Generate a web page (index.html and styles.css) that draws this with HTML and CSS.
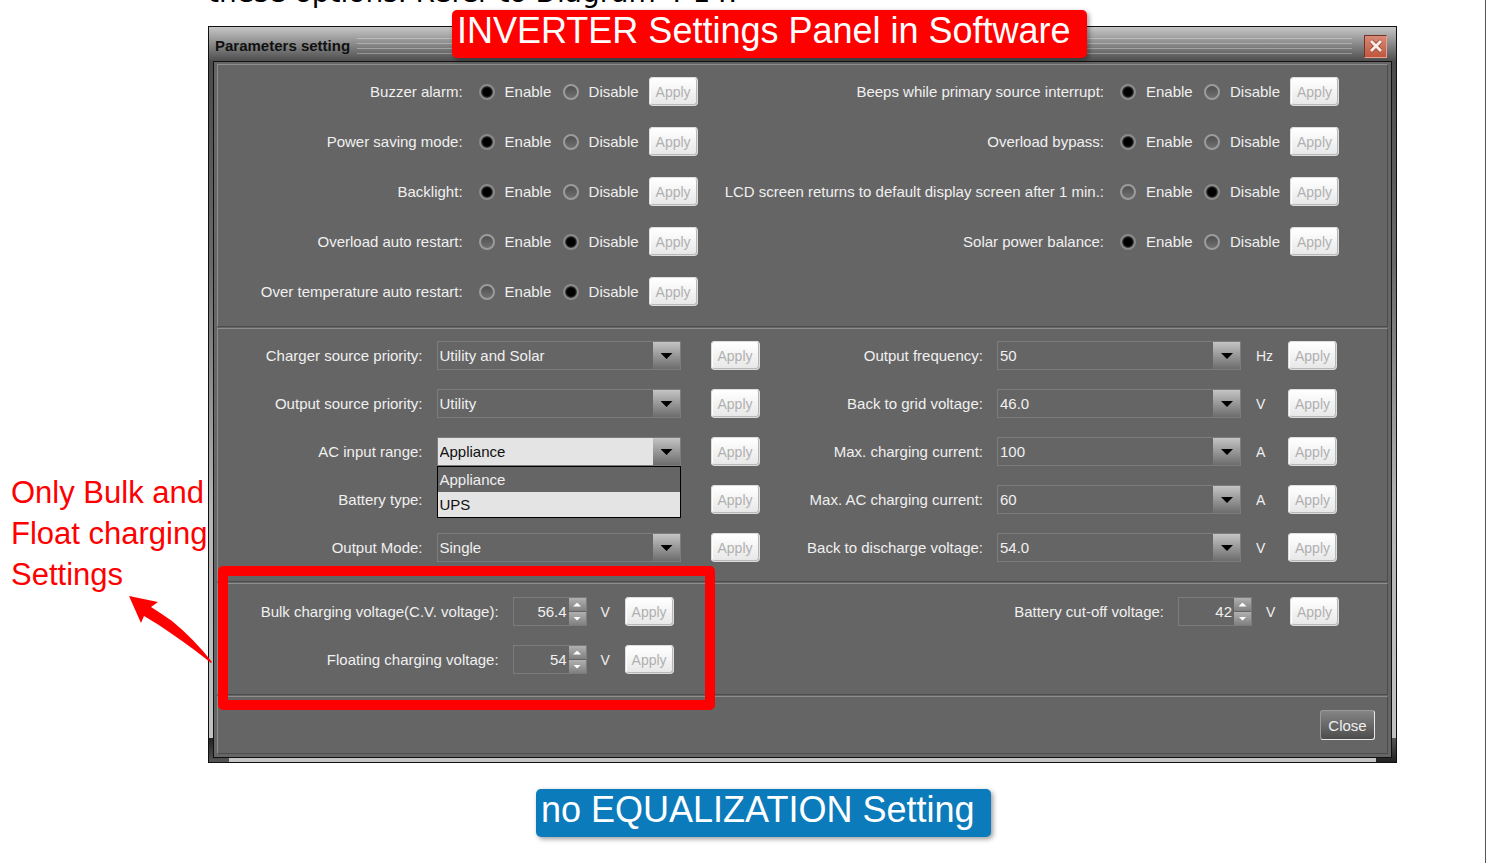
FILE: index.html
```html
<!DOCTYPE html>
<html lang="en">
<head>
    <meta charset="UTF-8">
    <meta name="viewport" content="width=device-width, initial-scale=1.0">
    <title>Parameters setting</title>
    <link rel="stylesheet" href="styles.css">
</head>
<body>
<main class="page">
    <p class="manual-text">these options. Refer to Diagram 4-14.</p>

    <div class="figure">
        <section class="window">
            <header class="title-bar">
                <h1>Parameters setting</h1>
                <span class="grip"></span>
                <button class="window-close" type="button" aria-label="Close window">
                    <svg viewBox="0 0 14 14" width="14" height="14"><path d="M2 2L12 12M12 2L2 12" stroke="#7d3020" stroke-width="4"/><path d="M2 2L12 12M12 2L2 12" stroke="#fbeee6" stroke-width="3"/></svg>
                </button>
            </header>

            <form class="panel">
                <!-- on / off options -->
                <div class="group switches">
                    <div class="column">
                        <div class="row" role="radiogroup" aria-labelledby="l-buzzer">
                            <span class="name" id="l-buzzer">Buzzer alarm:</span>
                            <label class="option"><input type="radio" name="buzzer" checked>Enable</label>
                            <label class="option"><input type="radio" name="buzzer">Disable</label>
                            <button class="apply" type="button" disabled>Apply</button>
                        </div>
                        <div class="row" role="radiogroup" aria-labelledby="l-saving">
                            <span class="name" id="l-saving">Power saving mode:</span>
                            <label class="option"><input type="radio" name="saving" checked>Enable</label>
                            <label class="option"><input type="radio" name="saving">Disable</label>
                            <button class="apply" type="button" disabled>Apply</button>
                        </div>
                        <div class="row" role="radiogroup" aria-labelledby="l-backlight">
                            <span class="name" id="l-backlight">Backlight:</span>
                            <label class="option"><input type="radio" name="backlight" checked>Enable</label>
                            <label class="option"><input type="radio" name="backlight">Disable</label>
                            <button class="apply" type="button" disabled>Apply</button>
                        </div>
                        <div class="row" role="radiogroup" aria-labelledby="l-overload">
                            <span class="name" id="l-overload">Overload auto restart:</span>
                            <label class="option"><input type="radio" name="overload">Enable</label>
                            <label class="option"><input type="radio" name="overload" checked>Disable</label>
                            <button class="apply" type="button" disabled>Apply</button>
                        </div>
                        <div class="row" role="radiogroup" aria-labelledby="l-overtemp">
                            <span class="name" id="l-overtemp">Over temperature auto restart:</span>
                            <label class="option"><input type="radio" name="overtemp">Enable</label>
                            <label class="option"><input type="radio" name="overtemp" checked>Disable</label>
                            <button class="apply" type="button" disabled>Apply</button>
                        </div>
                    </div>
                    <div class="column">
                        <div class="row" role="radiogroup" aria-labelledby="l-beeps">
                            <span class="name" id="l-beeps">Beeps while primary source interrupt:</span>
                            <label class="option"><input type="radio" name="beeps" checked>Enable</label>
                            <label class="option"><input type="radio" name="beeps">Disable</label>
                            <button class="apply" type="button" disabled>Apply</button>
                        </div>
                        <div class="row" role="radiogroup" aria-labelledby="l-bypass">
                            <span class="name" id="l-bypass">Overload bypass:</span>
                            <label class="option"><input type="radio" name="bypass" checked>Enable</label>
                            <label class="option"><input type="radio" name="bypass">Disable</label>
                            <button class="apply" type="button" disabled>Apply</button>
                        </div>
                        <div class="row" role="radiogroup" aria-labelledby="l-lcd">
                            <span class="name" id="l-lcd">LCD screen returns to default display screen after 1 min.:</span>
                            <label class="option"><input type="radio" name="lcd">Enable</label>
                            <label class="option"><input type="radio" name="lcd" checked>Disable</label>
                            <button class="apply" type="button" disabled>Apply</button>
                        </div>
                        <div class="row" role="radiogroup" aria-labelledby="l-solar">
                            <span class="name" id="l-solar">Solar power balance:</span>
                            <label class="option"><input type="radio" name="solar" checked>Enable</label>
                            <label class="option"><input type="radio" name="solar">Disable</label>
                            <button class="apply" type="button" disabled>Apply</button>
                        </div>
                    </div>
                </div>

                <!-- drop-downs -->
                <div class="group selects">
                    <div class="column">
                        <div class="row">
                            <label class="name" for="charger">Charger source priority:</label>
                            <span class="combo"><select id="charger"><option>Utility and Solar</option></select></span>
                            <button class="apply" type="button" disabled>Apply</button>
                        </div>
                        <div class="row">
                            <label class="name" for="source">Output source priority:</label>
                            <span class="combo"><select id="source"><option>Utility</option></select></span>
                            <button class="apply" type="button" disabled>Apply</button>
                        </div>
                        <div class="row">
                            <label class="name" for="range">AC input range:</label>
                            <span class="combo open">
                                <select id="range"><option>Appliance</option><option>UPS</option></select>
                                <ul class="menu">
                                    <li class="current">Appliance</li>
                                    <li>UPS</li>
                                </ul>
                            </span>
                            <button class="apply" type="button" disabled>Apply</button>
                        </div>
                        <div class="row">
                            <label class="name" for="battery">Battery type:</label>
                            <span class="combo"><select id="battery"></select></span>
                            <button class="apply" type="button" disabled>Apply</button>
                        </div>
                        <div class="row">
                            <label class="name" for="mode">Output Mode:</label>
                            <span class="combo"><select id="mode"><option>Single</option></select></span>
                            <button class="apply" type="button" disabled>Apply</button>
                        </div>
                    </div>
                    <div class="column">
                        <div class="row">
                            <label class="name" for="freq">Output frequency:</label>
                            <span class="combo"><select id="freq"><option>50</option></select></span>
                            <span class="unit">Hz</span>
                            <button class="apply" type="button" disabled>Apply</button>
                        </div>
                        <div class="row">
                            <label class="name" for="grid">Back to grid voltage:</label>
                            <span class="combo"><select id="grid"><option>46.0</option></select></span>
                            <span class="unit">V</span>
                            <button class="apply" type="button" disabled>Apply</button>
                        </div>
                        <div class="row">
                            <label class="name" for="maxcharge">Max. charging current:</label>
                            <span class="combo"><select id="maxcharge"><option>100</option></select></span>
                            <span class="unit">A</span>
                            <button class="apply" type="button" disabled>Apply</button>
                        </div>
                        <div class="row">
                            <label class="name" for="maxac">Max. AC charging current:</label>
                            <span class="combo"><select id="maxac"><option>60</option></select></span>
                            <span class="unit">A</span>
                            <button class="apply" type="button" disabled>Apply</button>
                        </div>
                        <div class="row">
                            <label class="name" for="discharge">Back to discharge voltage:</label>
                            <span class="combo"><select id="discharge"><option>54.0</option></select></span>
                            <span class="unit">V</span>
                            <button class="apply" type="button" disabled>Apply</button>
                        </div>
                    </div>
                </div>

                <!-- voltages -->
                <div class="group voltages">
                    <div class="column">
                        <div class="row">
                            <label class="name" for="bulk">Bulk charging voltage(C.V. voltage):</label>
                            <span class="spinner">
                                <input id="bulk" type="text" value="56.4">
                                <span class="steps"><button type="button" aria-label="Up"></button><button type="button" aria-label="Down"></button></span>
                            </span>
                            <span class="unit">V</span>
                            <button class="apply" type="button" disabled>Apply</button>
                        </div>
                        <div class="row">
                            <label class="name" for="float">Floating charging voltage:</label>
                            <span class="spinner">
                                <input id="float" type="text" value="54">
                                <span class="steps"><button type="button" aria-label="Up"></button><button type="button" aria-label="Down"></button></span>
                            </span>
                            <span class="unit">V</span>
                            <button class="apply" type="button" disabled>Apply</button>
                        </div>
                    </div>
                    <div class="column">
                        <div class="row">
                            <label class="name" for="cutoff">Battery cut-off voltage:</label>
                            <span class="spinner">
                                <input id="cutoff" type="text" value="42">
                                <span class="steps"><button type="button" aria-label="Up"></button><button type="button" aria-label="Down"></button></span>
                            </span>
                            <span class="unit">V</span>
                            <button class="apply" type="button" disabled>Apply</button>
                        </div>
                    </div>
                </div>

                <div class="group footer">
                    <button class="close" type="button">Close</button>
                </div>
            </form>
        </section>

        <!-- notes drawn over the window -->
        <div class="banner">INVERTER Settings Panel in Software</div>
        <div class="highlight"></div>
        <p class="note">Only Bulk and Float charging Settings</p>
        <svg class="arrow" viewBox="0 0 86 68" width="86" height="68"><path d="M1 0L30 6L23 11Q34 18 44 25Q66 43 84 66L83 67Q66 53 44 38Q30 28 16 20L13 27Z" fill="#ff0000"/></svg>
    </div>

    <div class="caption">no EQUALIZATION Setting</div>
</main>
</body>
</html>
```

FILE: styles.css
```css
* {
    box-sizing: border-box;
}

body {
    margin: 0;
    background: #fff;
    font-family: "Liberation Sans", Arial, sans-serif;
    font-size: 15px;
    color: #f0f0f0;
}

.page {
    min-height: 100vh;
    margin-right: 1px;
    padding: 0 88px 0 208px;
    border-right: 1px solid #555;
    overflow: hidden;
}

/* last line of the manual text, scrolled past the top */
.manual-text {
    height: 26px;
    margin: -20px 0 20px;
    color: #000;
    font-family: "DejaVu Sans", Verdana, sans-serif;
    font-size: 28px;
    line-height: 26px;
    white-space: nowrap;
}

.figure {
    position: relative;
}

/* window frame */
.window {
    border: 1px solid #111;
    padding: 0 4px 4px;
    background:
        linear-gradient(#222, #555) left bottom / 20px 24px no-repeat,
        linear-gradient(#555, #222) right bottom / 20px 24px no-repeat,
        linear-gradient(#c6c6c6 0, #4a4a4a 35px, #6a6a6a 240px, #b4b4b4 480px, #c4c4c4);
}

.title-bar {
    display: flex;
    align-items: center;
    height: 34px;
    padding: 4px 5px 0 2px;
}

.title-bar h1 {
    margin: 0;
    padding-bottom: 2px;
    color: #111;
    font-size: 15px;
    font-weight: bold;
}

.grip {
    flex: 1;
    height: 16px;
    margin: 0 12px 0 7px;
    background: repeating-linear-gradient(rgba(255, 255, 255, 0.3) 0, rgba(255, 255, 255, 0.3) 1px, transparent 1px, transparent 5px);
}

.window-close {
    display: flex;
    align-items: center;
    justify-content: center;
    width: 23px;
    height: 23px;
    padding: 0;
    border: 1px solid;
    border-color: #703428 #e8a090 #e8a090 #703428;
    background: linear-gradient(#d98a78, #c0563c);
}

.panel {
    border: 1px solid #111;
    background: #656565;
    padding: 2px 3px 3px;
}

/* groups */
.group {
    display: grid;
    border: 1px solid;
    border-color: #8e8e8e #4c4c4c #4c4c4c #8e8e8e;
    margin-bottom: 1px;
}

.column {
    display: flex;
    flex-direction: column;
}

.row {
    display: flex;
    align-items: center;
    justify-content: flex-end;
    height: 29px;
}

.name {
    white-space: nowrap;
}

.switches {
    grid-template-columns: 480fr 642fr;
    padding: 12px 48px 20px 0;
}

.switches .column {
    gap: 21px;
}

.switches .name {
    margin-right: 16px;
}

.selects {
    grid-template-columns: 542fr 578fr;
    padding: 12px 50px 19px 0;
}

.selects .column,
.voltages .column {
    gap: 19px;
}

.voltages {
    grid-template-columns: 456fr 666fr;
    padding: 13px 48px 20px 0;
}

.footer {
    justify-content: end;
    padding: 13px 12px 13px 0;
    margin: 0;
}

/* radio buttons */
.option {
    display: flex;
    align-items: center;
    width: 84px;
    gap: 10px;
}

.option + .apply {
    margin-left: 2px;
}

.option input {
    appearance: none;
    width: 16px;
    height: 16px;
    margin: 0;
    border: 2px solid #9c9c9c;
    border-radius: 50%;
    background: linear-gradient(#505050, #707070);
}

.option input:checked {
    border-color: #8a8a8a;
    background: radial-gradient(circle, #000 4px, #4a4a4a 6px);
}

/* buttons */
button {
    font-family: inherit;
    font-size: 15px;
}

.apply {
    width: 49px;
    height: 29px;
    padding: 0;
    border: 2px solid;
    border-color: #fff #b8b8b8 #b8b8b8 #fff;
    border-radius: 4px;
    outline: 1px solid #ddd;
    outline-offset: -1px;
    background: linear-gradient(#fff, #e8e8e8);
    color: #b0b0b0;
    font-size: 14px;
}

.close {
    width: 55px;
    height: 30px;
    padding: 0;
    border: 1px solid;
    border-color: #999 #e8e8e8 #e8e8e8 #999;
    border-radius: 3px;
    background: linear-gradient(#858585, #4c4c4c);
    color: #f0f0f0;
}

/* drop-downs */
.combo {
    position: relative;
    width: 244px;
    height: 29px;
    margin: 0 30px 0 14px;
}

.combo::after {
    content: "";
    position: absolute;
    right: 8px;
    top: 12px;
    width: 12px;
    height: 6px;
    background: #000;
    clip-path: polygon(0 0, 100% 0, 50% 100%);
    pointer-events: none;
}

.combo select {
    appearance: none;
    display: block;
    width: 100%;
    height: 100%;
    padding: 0 30px 0 2px;
    border: 1px solid #7c7c7c;
    border-radius: 0;
    background: linear-gradient(#c4c4c4, #6c6c6c) right / 27px 100% no-repeat #656565;
    color: #f0f0f0;
    font-family: inherit;
    font-size: 15px;
}

.combo.open select {
    background-color: #e4e4e4;
    color: #111;
}

.menu {
    position: absolute;
    z-index: 1;
    top: 29px;
    left: 0;
    right: 0;
    margin: 0;
    padding: 0;
    border: 1px solid #000;
    background: #e4e4e4;
    color: #111;
    list-style: none;
}

.menu li {
    height: 25px;
    padding-left: 2px;
    line-height: 25px;
}

.menu .current {
    background: #656565;
    color: #f0f0f0;
}

.unit {
    width: 24px;
    font-size: 14px;
}

.selects .unit {
    width: 32px;
}

.selects .combo:has(+ .unit) {
    margin-right: 15px;
}

/* number fields */
.spinner {
    display: flex;
    width: 74px;
    height: 29px;
    margin: 0 14px;
    border: 1px solid #7c7c7c;
}

.spinner input {
    flex: 1;
    width: 0;
    padding: 0 2px 0 0;
    border: 0;
    background: none;
    color: #f0f0f0;
    font-family: inherit;
    font-size: 15px;
    text-align: right;
}

.steps {
    display: flex;
    flex-direction: column;
    gap: 1px;
    width: 17px;
}

.steps button {
    flex: 1;
    display: flex;
    align-items: center;
    justify-content: center;
    padding: 0;
    border: 0;
    background: linear-gradient(#b0b0b0, #808080);
}

.steps button::before {
    content: "";
    width: 8px;
    height: 4px;
    background: #fff;
    clip-path: polygon(50% 0, 100% 100%, 0 100%);
}

.steps button:last-child::before {
    clip-path: polygon(0 0, 100% 0, 50% 100%);
}

/* notes */
.banner,
.caption {
    height: 48px;
    padding-left: 5px;
    border-radius: 5px;
    color: #fff;
    font-size: 36px;
    line-height: 42px;
    white-space: nowrap;
    box-shadow: 2px 2px 5px rgba(0, 0, 0, 0.4);
}

.banner {
    position: absolute;
    top: -16px;
    left: 244px;
    width: 635px;
    background: #ff0000;
}

.caption {
    width: 455px;
    margin: 26px 0 0 328px;
    background: #0b7bbb;
}

.highlight {
    position: absolute;
    top: 540px;
    left: 10px;
    width: 497px;
    height: 144px;
    border: 10px solid #ff0000;
    border-radius: 5px;
}

.note {
    position: absolute;
    top: 446px;
    left: -197px;
    width: 200px;
    margin: 0;
    color: #ff0000;
    font-size: 31px;
    line-height: 41px;
}

.arrow {
    position: absolute;
    top: 570px;
    left: -80px;
}
```
